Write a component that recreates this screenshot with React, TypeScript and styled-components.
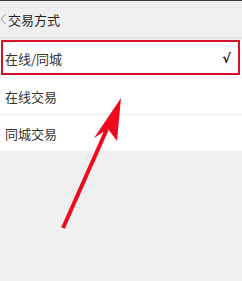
import React from "react";
import styled, { createGlobalStyle } from "styled-components";

const Global = createGlobalStyle`
  html, body { margin: 0; padding: 0; background: #efefef; }
  body { font-family: "Noto Sans CJK SC", "Noto Sans", sans-serif; }
`;

const Page = styled.div`
  position: relative;
  width: 242px;
  height: 281px;
  background: #efefef;
  border-top: 1px solid #3a3a3a;
  box-sizing: border-box;
  overflow: hidden;
`;

const Header = styled.div`
  display: flex;
  align-items: center;
  gap: 1px;
  height: 36px;
  background: #efefef;
  border-bottom: 1px solid #e2e2e2;
  font-size: 13px;
  color: #1e1e1e;
`;

const Back = styled.svg`
  width: 7px;
  height: 12px;
  flex: none;
`;

const List = styled.div`
  margin-top: 2px;
  background: #ffffff;
  display: flex;
  flex-direction: column;
`;

const Row = styled.div<{ $selected?: boolean; $first?: boolean }>`
  position: relative;
  height: 37px;
  display: flex;
  align-items: center;
  justify-content: space-between;
  padding: 0 11px 0 5px;
  font-size: 13px;
  color: #333333;
  box-sizing: border-box;
  border-top: ${(p) => (p.$first ? "none" : "1px solid #ececec")};
  &::after {
    content: "";
    display: ${(p) => (p.$selected ? "block" : "none")};
    position: absolute;
    left: 1px;
    right: 2px;
    top: 0;
    bottom: 2px;
    border: 2px solid #d3122a;
  }
`;

const Check = styled.span`
  font-family: "DejaVu Sans", sans-serif;
  font-size: 13px;
  font-weight: bold;
  color: #222;
`;

const Arrow = styled.svg`
  position: absolute;
  left: 0;
  top: 0;
  width: 242px;
  height: 281px;
  pointer-events: none;
`;

const items = [
  { label: "在线/同城", selected: true },
  { label: "在线交易", selected: false },
  { label: "同城交易", selected: false },
];

export default function App() {
  return (
    <>
      <Global />
      <Page>
        <Header>
          <Back viewBox="0 0 7 12">
            <polyline points="5.5,1 1,6 5.5,11" fill="none" stroke="#9a9a9a" strokeWidth="1" />
          </Back>
          <span>交易方式</span>
        </Header>
        <List>
          {items.map((it, i) => (
            <Row key={it.label} $selected={it.selected} $first={i === 0}>
              <span>{it.label}</span>
              {it.selected && <Check>√</Check>}
            </Row>
          ))}
        </List>
        <Arrow viewBox="0 0 242 281">
          <line x1="63" y1="227" x2="107" y2="128" stroke="#ee0a1c" strokeWidth="4" strokeLinecap="butt" />
          <polygon points="121,97 117,140 108,128 94,137" fill="#ee0a1c" />
        </Arrow>
      </Page>
    </>
  );
}
